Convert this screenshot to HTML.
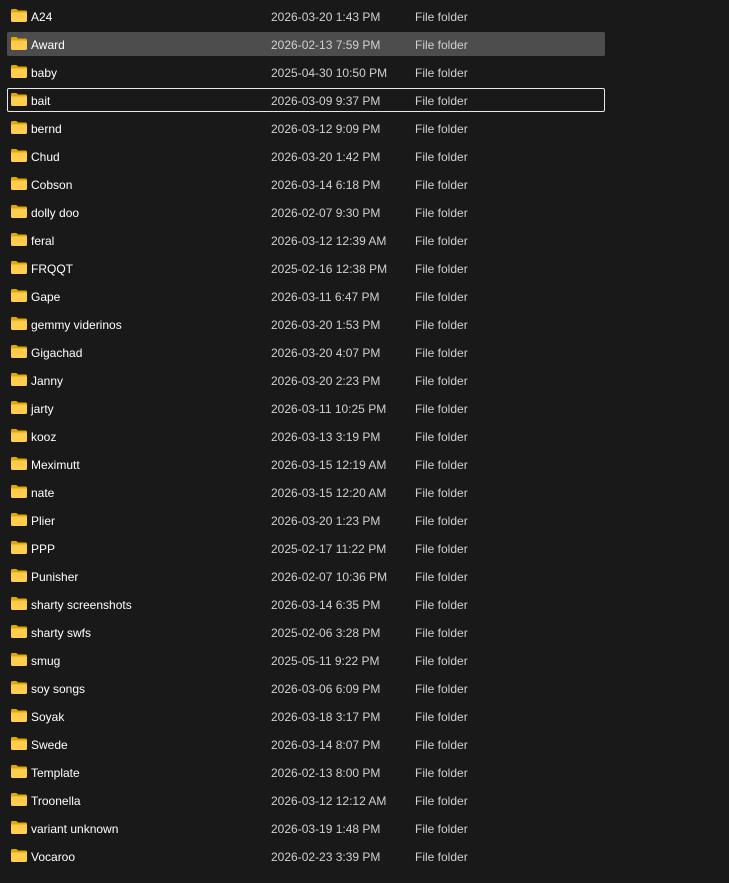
<!DOCTYPE html>
<html><head><style>
body{margin:0;background:#191919;width:729px;height:883px;overflow:hidden;font-family:"Liberation Sans",sans-serif;font-size:12px;color:#fff}
.r{position:absolute;left:7px;width:598px;height:24px;box-sizing:border-box;border-radius:2px;white-space:nowrap}
.r.s{background:#4d4d4d}
.r.f{border:1px solid #e8e8e8}
.w{position:absolute;width:598px;height:24px}
.w svg{position:absolute;left:4px;top:5px}
.n{position:absolute;left:24px;top:6px;color:#fff}
.d{position:absolute;left:264px;top:6px;color:#d0d0d0}
.t{position:absolute;left:408px;top:6px;color:#d0d0d0}
</style></head><body>
<div id="c"></div>
<script>
var rows=[["A24","2026-03-20 1:43 PM"],["Award","2026-02-13 7:59 PM"],["baby","2025-04-30 10:50 PM"],["bait","2026-03-09 9:37 PM"],["bernd","2026-03-12 9:09 PM"],["Chud","2026-03-20 1:42 PM"],["Cobson","2026-03-14 6:18 PM"],["dolly doo","2026-02-07 9:30 PM"],["feral","2026-03-12 12:39 AM"],["FRQQT","2025-02-16 12:38 PM"],["Gape","2026-03-11 6:47 PM"],["gemmy viderinos","2026-03-20 1:53 PM"],["Gigachad","2026-03-20 4:07 PM"],["Janny","2026-03-20 2:23 PM"],["jarty","2026-03-11 10:25 PM"],["kooz","2026-03-13 3:19 PM"],["Meximutt","2026-03-15 12:19 AM"],["nate","2026-03-15 12:20 AM"],["Plier","2026-03-20 1:23 PM"],["PPP","2025-02-17 11:22 PM"],["Punisher","2026-02-07 10:36 PM"],["sharty screenshots","2026-03-14 6:35 PM"],["sharty swfs","2025-02-06 3:28 PM"],["smug","2025-05-11 9:22 PM"],["soy songs","2026-03-06 6:09 PM"],["Soyak","2026-03-18 3:17 PM"],["Swede","2026-03-14 8:07 PM"],["Template","2026-02-13 8:00 PM"],["Troonella","2026-03-12 12:12 AM"],["variant unknown","2026-03-19 1:48 PM"],["Vocaroo","2026-02-23 3:39 PM"]];
var ic='<svg width="16" height="13" viewBox="0 0 16 13"><path d="M0 1.5Q0 0 1.5 0H5.5L7 1.5H14.5Q16 1.5 16 3V4H0Z" fill="#e0a800"/><path d="M0 3.5H16V11.5Q16 13 14.5 13H1.5Q0 13 0 11.5Z" fill="#ffcc4d"/></svg>';
var h='';rows.forEach(function(r,i){var c=i==1?' s':(i==3?' f':'');var o=i==3?-1:0;
h+='<div class="r'+c+'" style="top:'+(4+i*28)+'px"><div class="w" style="left:'+o+'px;top:'+o+'px">'+ic+'<span class="n">'+r[0]+'</span><span class="d">'+r[1]+'</span><span class="t">File folder</span></div></div>';});
document.getElementById('c').innerHTML=h;
</script>
</body></html>
